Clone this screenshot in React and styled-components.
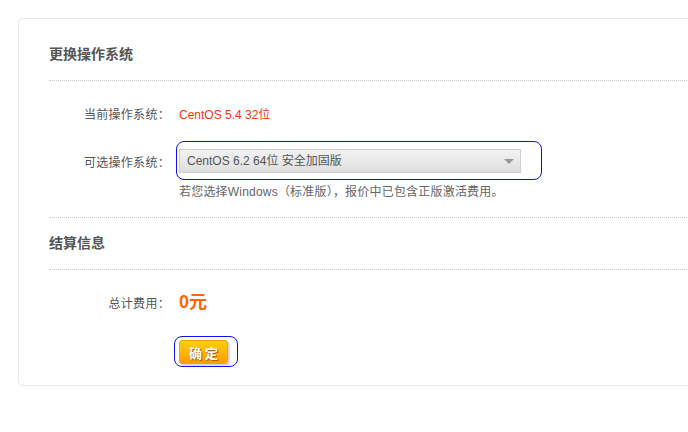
import styled, { createGlobalStyle } from 'styled-components';

const GlobalStyle = createGlobalStyle`
  html, body {
    margin: 0;
    padding: 0;
    background: #fff;
    overflow: hidden;
  }
  body {
    font-family: "Liberation Sans", Arial, "Noto Sans CJK SC", sans-serif;
    font-size: 12px;
    color: #666;
  }
`;

const Page = styled.div`
  padding: 18px 0 0 18px;
  width: 688px;
  height: 432px;
  box-sizing: border-box;
  overflow: hidden;
`;

const Card = styled.div`
  width: 720px;
  border: 1px solid #e6e6e6;
  border-radius: 5px;
  padding: 0 0 21px 30px;
  box-sizing: border-box;
`;

const Heading = styled.h3`
  margin: 0;
  padding: ${p => p.$top}px 0 18px;
  font-size: 14px;
  line-height: 16px;
  font-weight: bold;
  color: #555;
  border-bottom: 1px dotted #c8c8c8;
`;

const Section = styled.div`
  padding: 20px 0 ${p => p.$bottom || 0}px;
  border-bottom: ${p => (p.$line ? '1px dotted #c8c8c8' : 'none')};
`;

const Row = styled.div`
  display: flex;
  align-items: center;
  min-height: 24px;
  margin-top: ${p => p.$mt || 0}px;
`;

const Label = styled.div`
  width: 121px;
  text-align: right;
  color: #555;
  flex-shrink: 0;
  letter-spacing: 0.3px;
`;

const Field = styled.div`
  margin-left: 9px;
`;

const Current = styled.span`
  color: #f03a0a;
`;

const Price = styled.span`
  color: #ff6600;
  font-size: 18px;
  font-weight: bold;
  line-height: 24px;
`;

const Focus = styled.div`
  position: relative;
  display: inline-block;
  &::after {
    content: '';
    position: absolute;
    top: ${p => p.$t}px;
    right: ${p => p.$r}px;
    bottom: ${p => p.$b}px;
    left: ${p => p.$l}px;
    border: 1.5px solid #1010f0;
    border-radius: 8px;
    pointer-events: none;
  }
`;

const SelectBox = styled.div`
  position: relative;
  width: 333px;
  height: 22px;
  line-height: 22px;
  padding-left: 7px;
  box-sizing: content-box;
  border: 1px solid #cfcfcf;
  background: linear-gradient(#f3f3f3, #dedede);
  color: #555;
  &::after {
    content: '';
    position: absolute;
    right: 6px;
    top: 9px;
    border-left: 5px solid transparent;
    border-right: 5px solid transparent;
    border-top: 5px solid #999;
  }
`;

const Hint = styled.div`
  margin: 11px 0 0 130px;
  line-height: 16px;
  color: #666;
  letter-spacing: 0.2px;
`;

const Button = styled.button`
  width: 49px;
  height: 24px;
  padding: 0;
  border: 1px solid #f0a400;
  border-radius: 3px;
  background: linear-gradient(#ffcf10, #ff9c00);
  box-shadow: 2px 2px 2px rgba(0, 0, 0, 0.18);
  color: #fff;
  font-family: "Liberation Sans", "Noto Sans CJK SC", sans-serif;
  font-size: 13px;
  font-weight: bold;
  letter-spacing: 3px;
  text-indent: 3px;
  text-shadow: 1px 1px 1px #a65a00;
  cursor: pointer;
`;

export default function App() {
  return (
    <Page>
      <GlobalStyle />
      <Card>
        <Heading $top={27}>更换操作系统</Heading>
        <Section $line $bottom={17}>
          <Row>
            <Label>当前操作系统： </Label>
            <Field>
              <Current>CentOS 5.4 32位</Current>
            </Field>
          </Row>
          <Row $mt={24}>
            <Label>可选操作系统： </Label>
            <Field>
              <Focus $t={-8} $r={-21} $b={-7} $l={-3}>
                <SelectBox>CentOS 6.2 64位 安全加固版</SelectBox>
              </Focus>
            </Field>
          </Row>
          <Hint>若您选择Windows（标准版），报价中已包含正版激活费用。</Hint>
        </Section>
        <Heading $top={17}>结算信息</Heading>
        <Section>
          <Row>
            <Label>总计费用： </Label>
            <Field>
              <Price>0元</Price>
            </Field>
          </Row>
          <Row $mt={26}>
            <Label />
            <Field>
              <Focus $t={-4} $r={-10} $b={-3} $l={-5}>
                <Button>确定</Button>
              </Focus>
            </Field>
          </Row>
        </Section>
      </Card>
    </Page>
  );
}
